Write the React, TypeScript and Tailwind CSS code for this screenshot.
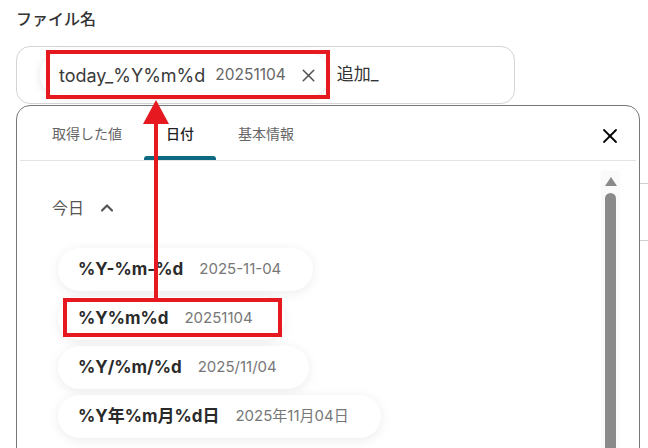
import { X, ChevronUp } from 'lucide-react';

const formats = [
  { id: 1, pattern: '%Y-%m-%d', value: '2025-11-04' },
  { id: 2, pattern: '%Y%m%d', value: '20251104' },
  { id: 3, pattern: '%Y/%m/%d', value: '2025/11/04' },
  { id: 4, pattern: '%Y年%m月%d日', value: '2025年11月04日' },
];

const tabs = [
  { id: 'values', label: '取得した値', active: false },
  { id: 'date', label: '日付', active: true },
  { id: 'basic', label: '基本情報', active: false },
];

const App = () => {
  return (
    <div className="relative w-[648px] h-[448px] overflow-hidden bg-white font-['Inter','Noto_Sans_CJK_JP',sans-serif] text-[#333]">
      <div className="pl-4 pt-[8px]">
        <h2 className="text-[16px] leading-[22px] font-medium text-[#333]">ファイル名</h2>

        {/* input with chip */}
        <div className="mt-[16px] w-[499px] h-[58px] border border-[#d4d4d4] rounded-[14px] flex items-center pl-[23px]">
          <div className="h-[44px] rounded-full bg-white shadow-[0_1px_10px_rgba(0,0,0,0.10)] flex items-center pl-[19px] pr-[10px]">
            <span className="text-[18px] text-[#3a3a3a]">today_%Y%m%d</span>
            <span className="ml-[10px] text-[15.5px] text-[#666]">20251104</span>
            <X className="ml-[12px] w-[21px] h-[21px] text-[#555]" strokeWidth={1.8} />
          </div>
          <span className="ml-[8px] text-[17px] text-[#333]">追加_</span>
        </div>

        <div className="flex">
          {/* dropdown panel */}
          <div className="mt-[1px] w-[624px] h-[380px] border border-[#777] rounded-t-[14px] bg-white flex flex-col">
            <div className="relative flex items-center h-[54px] pl-[13px]">
              {tabs.map((tab) => (
                <div
                  key={tab.id}
                  className={`relative h-full flex items-center px-[22px] text-[14px] ${
                    tab.active ? 'text-[#222] font-medium' : 'text-[#666]'
                  }`}
                >
                  {tab.label}
                  {tab.active && (
                    <span className="absolute left-0 right-0 bottom-0 h-[4px] rounded-t-[3px] bg-[#0e6982]" />
                  )}
                </div>
              ))}
              <X className="ml-auto mr-[17px] mt-[6px] w-[24px] h-[24px] text-black" strokeWidth={1.8} />
            </div>
            <div className="mx-[3px] h-px bg-[#e4e4e4]" />

            <div className="flex flex-1">
              <div className="flex-1">
                <div className="flex items-center pl-[35px] mt-[35px] h-[24px]">
                  <span className="text-[16px] text-[#555]">今日</span>
                  <ChevronUp className="ml-[13px] w-[20px] h-[20px] text-[#555]" strokeWidth={2.6} />
                </div>
                <div className="mt-[28px] pl-[41px] flex flex-col items-start gap-[6px]">
                  {formats.map((f) => (
                    <div
                      key={f.id}
                      className="h-[43px] rounded-full bg-white shadow-[0_2px_12px_rgba(0,0,0,0.08)] flex items-center pl-[20px] pr-[32px]"
                    >
                      <span className="text-[17px] font-bold text-[#2a2a2a]">{f.pattern}</span>
                      <span className="ml-[16px] text-[15px] text-[#777]">{f.value}</span>
                    </div>
                  ))}
                </div>
              </div>

              {/* scrollbar */}
              <div className="w-[19px] mr-[19px] mt-[10px] bg-[#fafafa] flex flex-col items-center">
                <div className="mt-[6px] w-0 h-0 border-l-[6px] border-r-[6px] border-b-[9px] border-l-transparent border-r-transparent border-b-[#8a8a8a]" />
                <div className="mt-[7px] w-[11px] flex-1 rounded-full bg-[#8a8a8a]" />
              </div>
            </div>
          </div>

          {/* page content behind the panel */}
          <div className="flex-1 flex flex-col">
            <div className="mt-[79px] h-px bg-[#d0d0d0]" />
            <div className="mt-[56px] h-px bg-[#d0d0d0]" />
          </div>
        </div>
      </div>

      {/* annotations */}
      <div className="absolute left-[46px] top-[50px] w-[284px] h-[49px] border-4 border-[#e5191f]" />
      <div className="absolute left-[63px] top-[298px] w-[219px] h-[39px] border-4 border-[#e5191f]" />
      <svg className="absolute left-0 top-0" width="648" height="448" viewBox="0 0 648 448">
        <rect x="154" y="120" width="4" height="179" fill="#e5191f" />
        <polygon points="156,100 143,124 169,124" fill="#e5191f" />
      </svg>
    </div>
  );
};

export default App;
